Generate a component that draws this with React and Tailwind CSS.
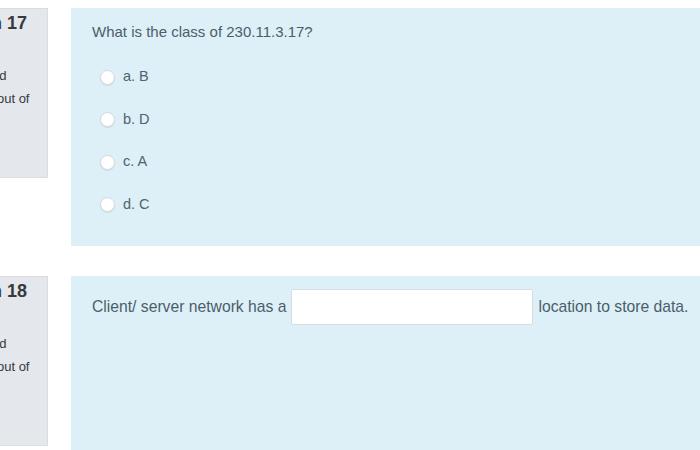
import React from "react";

const Info = ({ number }) => (
    <div className="w-[48px] h-[170px] shrink-0 bg-[#e4e7eb] border border-[#d9dde2] border-l-0 overflow-hidden text-[#373a3c]">
        <h3 className="ml-[-76px] w-[140px] pt-[3px] text-[18px] font-bold leading-[22px]">Question {number}</h3>
        <div className="ml-[-50px] w-[100px] text-[13px] leading-[23px]">
            <p className="mt-[7px]">Not yet</p>
            <p>answered</p>
            <p>Marked out of</p>
            <p>1.00</p>
            <p className="ml-[-32px] mt-[14px] text-[#d3d7dc]">Flag question</p>
        </div>
    </div>
);

const Radio = ({ label }) => (
    <label className="flex items-center gap-[8px] h-[42.5px]">
        <span className="w-[15px] h-[15px] rounded-full bg-white border border-[#d3d7db] shadow-[0_1px_1px_rgba(0,0,0,0.08)]" />
        <span className="text-[14.5px] text-[#4f6470]">{label}</span>
    </label>
);

export default function App() {
    const options = ["a. B", "b. D", "c. A", "d. C"];

    return (
        <div className="w-[700px] h-[450px] overflow-hidden bg-white" style={{ fontFamily: "'Liberation Sans', Arial, sans-serif" }}>
            <div className="flex items-start gap-[23px] pt-[8px]">
                <Info number={17} />
                <div className="flex-1 h-[238px] bg-[#def0f7] pl-[21px] pt-[14px]">
                    <p className="text-[15px] text-[#4a5e6a] leading-[20px]">What is the class of 230.11.3.17?</p>
                    <div className="mt-[14px] pl-[8px]">
                        {options.map((o) => (
                            <Radio key={o} label={o} />
                        ))}
                    </div>
                </div>
            </div>
            <div className="flex items-start gap-[23px] mt-[30px]">
                <Info number={18} />
                <div className="flex-1 h-[180px] bg-[#def0f7] pl-[21px] pt-[13px]">
                    <div className="flex items-center gap-[5px] text-[15.7px] text-[#4a5e6a]">
                        <span>Client/ server network has a</span>
                        <input
                            type="text"
                            className="w-[242px] h-[36px] bg-white border border-[#d6dee3] rounded-[2px] outline-none"
                        />
                        <span>location to store data.</span>
                    </div>
                </div>
            </div>
        </div>
    );
}
